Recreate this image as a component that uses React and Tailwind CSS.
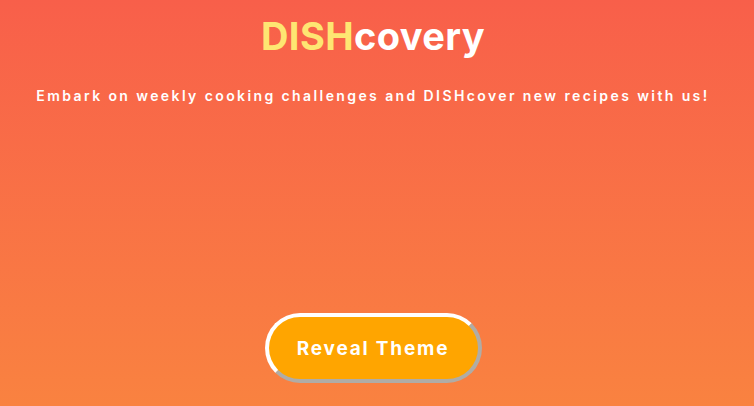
export default function App() {
  return (
    <div className="flex h-[406px] w-[754px] flex-col items-center bg-gradient-to-b from-[#f85f4a] to-[#f98240] pr-[8px] text-white" style={{ fontFamily: "Inter, 'Noto Sans', sans-serif" }}>
      <h1 className="mt-[11px] text-[38px] font-bold leading-[50px] tracking-[0.4px]">
        <span className="text-[#fee672]">DISH</span>covery
      </h1>
      <p className="mt-[25px] text-[14px] font-semibold leading-[20px] tracking-[2.4px]">
        Embark on weekly cooking challenges and DISHcover new recipes with us!
      </p>
      <button className="mt-[207px] flex h-[70px] w-[217px] items-center justify-center rounded-full border-4 border-t-white border-l-white border-r-[#b0aca6] border-b-[#b0aca6] bg-[#ffa500] pt-[2px] text-[19px] font-bold tracking-[1.8px] text-white">
        Reveal Theme
      </button>
    </div>
  );
}
